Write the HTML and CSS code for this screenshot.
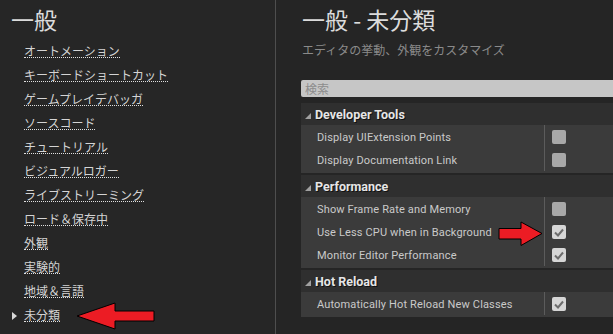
FILE: index.html
```html
<!DOCTYPE html>
<html lang="ja">
<head>
    <meta charset="UTF-8">
    <meta name="viewport" content="width=device-width, initial-scale=1.0">
    <title>エディタの環境設定 - 一般</title>
    <link rel="stylesheet" href="styles.css">
</head>
<body>
    <div class="layout">
        <aside class="sidebar">
            <h1 class="side-title">一般</h1>
            <ul class="nav">
                <li><span class="marker"></span><a href="#">オートメーション</a></li>
                <li><span class="marker"></span><a href="#">キーボードショートカット</a></li>
                <li><span class="marker"></span><a href="#">ゲームプレイデバッガ</a></li>
                <li><span class="marker"></span><a href="#">ソースコード</a></li>
                <li><span class="marker"></span><a href="#">チュートリアル</a></li>
                <li><span class="marker"></span><a href="#">ビジュアルロガー</a></li>
                <li><span class="marker"></span><a href="#">ライブストリーミング</a></li>
                <li><span class="marker"></span><a href="#">ロード＆保存中</a></li>
                <li><span class="marker"></span><a href="#">外観</a></li>
                <li><span class="marker"></span><a href="#">実験的</a></li>
                <li><span class="marker"></span><a href="#">地域＆言語</a></li>
                <li class="current"><span class="marker"></span><a href="#">未分類</a></li>
            </ul>
        </aside>

        <main class="main">
            <h1 class="page-title">一般 - 未分類</h1>
            <p class="subtitle">エディタの挙動、外観をカスタマイズ</p>
            <input class="search" type="text" placeholder="検索">

            <div class="details">
                <section class="category">
                    <div class="category-header"><span class="expander"></span>Developer Tools</div>
                    <div class="rows">
                        <div class="row">
                            <div class="row-name">Display UIExtension Points</div>
                            <div class="row-value"><span class="checkbox"></span></div>
                        </div>
                        <div class="row">
                            <div class="row-name">Display Documentation Link</div>
                            <div class="row-value"><span class="checkbox"></span></div>
                        </div>
                    </div>
                </section>

                <section class="category">
                    <div class="category-header"><span class="expander"></span>Performance</div>
                    <div class="rows">
                        <div class="row">
                            <div class="row-name">Show Frame Rate and Memory</div>
                            <div class="row-value"><span class="checkbox"></span></div>
                        </div>
                        <div class="row">
                            <div class="row-name">Use Less CPU when in Background</div>
                            <div class="row-value"><span class="checkbox checked"><svg viewBox="0 0 14 14"><polyline points="3,7.5 6,10.5 11,4.5"/></svg></span></div>
                        </div>
                        <div class="row">
                            <div class="row-name">Monitor Editor Performance</div>
                            <div class="row-value"><span class="checkbox checked"><svg viewBox="0 0 14 14"><polyline points="3,7.5 6,10.5 11,4.5"/></svg></span></div>
                        </div>
                    </div>
                </section>

                <section class="category">
                    <div class="category-header"><span class="expander"></span>Hot Reload</div>
                    <div class="rows">
                        <div class="row">
                            <div class="row-name">Automatically Hot Reload New Classes</div>
                            <div class="row-value"><span class="checkbox checked"><svg viewBox="0 0 14 14"><polyline points="3,7.5 6,10.5 11,4.5"/></svg></span></div>
                        </div>
                    </div>
                </section>
            </div>
        </main>
    </div>

    <!-- red callout arrows drawn over the screenshot -->
    <svg class="callouts" width="613" height="334" viewBox="0 0 613 334">
        <polygon points="77,316 115,303 115,311 154,311 154,321 115,321 115,329"/>
        <polygon points="542,233.5 521,222 521,228.5 499,228.5 499,239 521,239 521,245.5"/>
    </svg>
</body>
</html>
```

FILE: styles.css
```css
body {
    margin: 0;
    width: 613px;
    height: 334px;
    overflow: hidden;
    background-color: #252525;
    font-family: Roboto, "Noto Sans CJK JP", sans-serif;
    color: #d0d0d0;
    position: relative;
}
.layout {
    display: flex;
    height: 100%;
}
.sidebar {
    width: 275px;
    flex-shrink: 0;
    border-right: 1px solid #4e4e4e;
    background-color: #262626;
}
.side-title,
.page-title {
    margin: 0;
    padding-top: 4px;
    font-family: "Noto Sans CJK JP", sans-serif;
    font-size: 23px;
    font-weight: normal;
    line-height: 30px;
    color: #dcdcdc;
}
.side-title {
    padding-left: 11px;
}
.nav {
    list-style: none;
    margin: 5px 0 0;
    padding: 0 0 0 12px;
}
.nav li {
    display: flex;
    align-items: center;
    height: 24px;
}
.marker {
    width: 12px;
    flex-shrink: 0;
}
.nav li.current .marker::before {
    content: "";
    display: block;
    width: 0;
    height: 0;
    border-top: 4px solid transparent;
    border-bottom: 4px solid transparent;
    border-left: 5px solid #d8d8d8;
    margin-top: 2px;
}
.nav a {
    display: inline-block;
    font-family: "Noto Sans CJK JP", sans-serif;
    font-size: 12px;
    line-height: 13px;
    color: #d4d4d4;
    text-decoration: none;
    border-bottom: 1px dotted #e0e0e0;
}
.main {
    flex: 1;
    padding-left: 25px;
    min-width: 0;
}
.page-title {
    padding-left: 1px;
}
.subtitle {
    margin: 8px 0 0 1px;
    font-family: "Noto Sans CJK JP", sans-serif;
    font-size: 12px;
    line-height: 16px;
    color: #8a8a8a;
}
.search {
    display: block;
    box-sizing: border-box;
    width: 100%;
    height: 17px;
    margin: 22px 0 0;
    padding: 0 4px;
    border: none;
    border-radius: 2px 0 0 2px;
    background-color: #c6c6c6;
    font-family: "Noto Sans CJK JP", sans-serif;
    font-size: 12px;
    outline: none;
}
.search::placeholder {
    color: #8c8c8c;
}
.details {
    margin-top: 6px;
    display: flex;
    flex-direction: column;
    gap: 2px;
}
.category-header {
    display: flex;
    align-items: center;
    height: 22px;
    background-color: #2f2f2f;
    font-size: 12.5px;
    font-weight: bold;
    color: #e6e6e6;
    text-shadow: 1px 1px 0 #111;
}
.expander {
    width: 0;
    height: 0;
    margin: 3px 4px 0 4px;
    border-left: 6px solid transparent;
    border-bottom: 6px solid #a0a0a0;
}
.rows {
    background-color: #3b3b3b;
    padding-bottom: 2px;
}
.row {
    display: flex;
    height: 23px;
}
.row-name {
    width: 244px;
    flex-shrink: 0;
    box-sizing: border-box;
    padding: 1px 0 0 16px;
    display: flex;
    align-items: center;
    font-size: 11px;
    letter-spacing: 0.15px;
    color: #cacaca;
    border-right: 1px solid #5c5c5c;
}
.row-value {
    display: flex;
    align-items: center;
    padding-left: 7px;
}
.checkbox {
    display: block;
    width: 14px;
    height: 14px;
    border-radius: 2px;
    background-color: #a8a8a8;
}
.checkbox.checked {
    background-color: #d6d6d6;
}
.checkbox svg {
    display: block;
    width: 14px;
    height: 14px;
}
.checkbox polyline {
    fill: none;
    stroke: #6c6c6c;
    stroke-width: 2;
}
.callouts {
    position: absolute;
    left: 0;
    top: 0;
    pointer-events: none;
}
.callouts polygon {
    fill: #ec1c24;
    stroke: #000;
    stroke-width: 1;
}
```
